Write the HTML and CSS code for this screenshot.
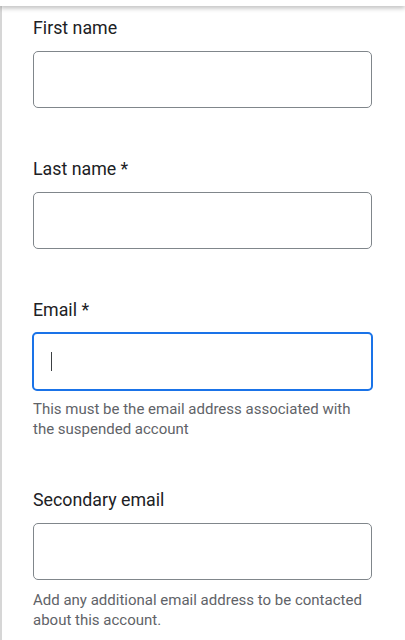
FILE: index.html
```html
<!DOCTYPE html>
<html>
<head>
<meta charset="utf-8">
<link rel="stylesheet" href="styles.css">
</head>
<body>
<div class="topbar"></div>
<div class="page">
  <form class="form">
    <div class="field">
      <label class="label">First name</label>
      <div class="input"></div>
    </div>
    <div class="field">
      <label class="label">Last name *</label>
      <div class="input"></div>
    </div>
    <div class="field">
      <label class="label">Email *</label>
      <div class="input focused"><span class="caret"></span></div>
      <p class="help">This must be the email address associated with the suspended account</p>
    </div>
    <div class="field">
      <label class="label">Secondary email</label>
      <div class="input"></div>
      <p class="help">Add any additional email address to be contacted about this account.</p>
    </div>
  </form>
</div>
</body>
</html>
```
FILE: styles.css
```css
html, body {
  margin: 0;
  padding: 0;
  background: #fff;
  font-family: Roboto, "Liberation Sans", sans-serif;
  overflow: hidden;
}
.topbar {
  position: relative;
  z-index: 2;
  height: 6px;
  background: #fff;
  box-shadow: 0 2px 5px rgba(0, 0, 0, 0.28);
}
.page {
  border-left: 2px solid #d6d6d6;
  height: 634px;
  box-sizing: border-box;
  padding: 10px 33px 0 31px;
}
.form {
  display: flex;
  flex-direction: column;
  gap: 49px;
}
.field {
  display: flex;
  flex-direction: column;
}
.label {
  display: block;
  font-size: 17.8px;
  line-height: 24px;
  color: #202124;
  margin-bottom: 11px;
}
.input {
  height: 55px;
  border: 1px solid #80868b;
  border-radius: 5px;
  box-sizing: content-box;
  display: flex;
  align-items: center;
}
.input.focused {
  border: 2px solid #1a73e8;
  margin: -1px;
  height: 55px;
}
.caret {
  display: block;
  width: 1px;
  height: 19px;
  margin-left: 17px;
  background: #3c4043;
}
.help {
  margin: 10px 0 0;
  font-size: 15px;
  line-height: 20px;
  color: #5f6368;
}
.field:nth-child(3) .help {
  margin-top: 9px;
}
```
